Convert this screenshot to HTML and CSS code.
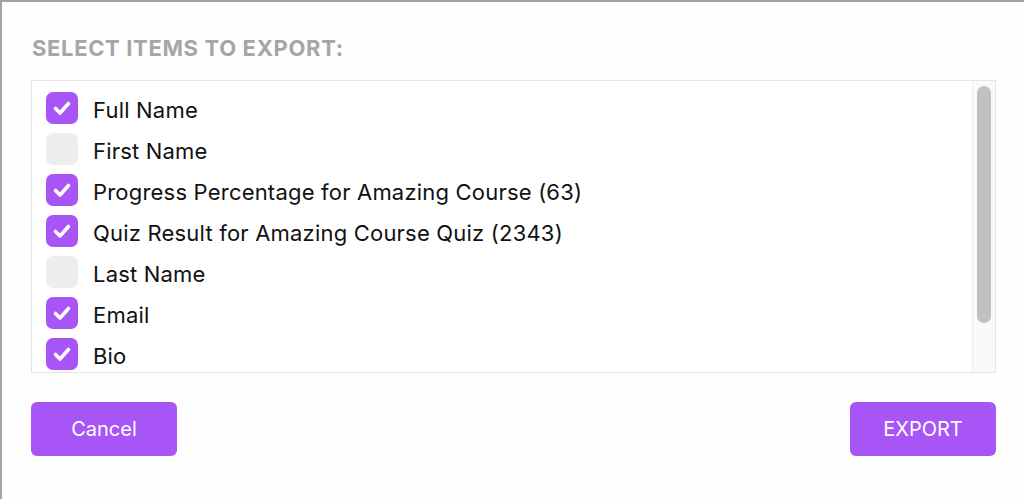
FILE: index.html
```html
<!DOCTYPE html>
<html lang="en">
<head>
<meta charset="utf-8">
<title>Export</title>
<link rel="stylesheet" href="styles.css">
</head>
<body>
<div class="dialog">
  <h2 class="title">SELECT ITEMS TO EXPORT:</h2>
  <div class="list">
    <div class="items">
      <label class="row"><span class="box on"><svg viewBox="0 0 32 32"><path d="M9.5 16.5l4.5 4.5 8.5-9.5"/></svg></span><span class="lbl">Full Name</span></label>
      <label class="row"><span class="box"></span><span class="lbl">First Name</span></label>
      <label class="row"><span class="box on"><svg viewBox="0 0 32 32"><path d="M9.5 16.5l4.5 4.5 8.5-9.5"/></svg></span><span class="lbl">Progress Percentage for Amazing Course (63)</span></label>
      <label class="row"><span class="box on"><svg viewBox="0 0 32 32"><path d="M9.5 16.5l4.5 4.5 8.5-9.5"/></svg></span><span class="lbl">Quiz Result for Amazing Course Quiz (2343)</span></label>
      <label class="row"><span class="box"></span><span class="lbl">Last Name</span></label>
      <label class="row"><span class="box on"><svg viewBox="0 0 32 32"><path d="M9.5 16.5l4.5 4.5 8.5-9.5"/></svg></span><span class="lbl">Email</span></label>
      <label class="row"><span class="box on"><svg viewBox="0 0 32 32"><path d="M9.5 16.5l4.5 4.5 8.5-9.5"/></svg></span><span class="lbl">Bio</span></label>
    </div>
    <div class="scrollbar"><div class="thumb"></div></div>
  </div>
  <div class="actions">
    <button class="btn">Cancel</button>
    <button class="btn">EXPORT</button>
  </div>
</div>
</body>
</html>
```
FILE: styles.css
```css
html, body {
  margin: 0;
  padding: 0;
  background: #ffffff;
}
body {
  font-family: Inter, "Liberation Sans", sans-serif;
  color: #111111;
}
.dialog {
  box-sizing: border-box;
  height: 499px;
  border-top: 2px solid #a3a3a3;
  border-left: 2px solid #a3a3a3;
  padding: 33px 28px 0 29px;
  background: #fefefe;
}
.title {
  margin: 0 0 19px 1px;
  font-size: 22px;
  font-weight: 700;
  line-height: 26px;
  letter-spacing: 0.65px;
  color: #a6a6a6;
}
.list {
  box-sizing: border-box;
  height: 293px;
  border: 1px solid #e6e6e6;
  display: flex;
  background: #ffffff;
}
.items {
  flex: 1;
  overflow: hidden;
  padding: 11px 0 0 14px;
  display: flex;
  flex-direction: column;
  gap: 9px;
}
.scrollbar {
  flex: none;
  width: 23px;
  box-sizing: border-box;
  border-left: 1px solid #ececec;
  background: #fafafa;
  padding: 5px 4px 0 4px;
}
.thumb {
  height: 237px;
  background: #c1c1c1;
  border-radius: 7px;
}
.row {
  display: flex;
  align-items: center;
  gap: 15px;
  flex: none;
  height: 32px;
}
.box {
  width: 32px;
  height: 32px;
  border-radius: 7px;
  background: #eeeeee;
  flex: none;
  display: flex;
}
.box.on {
  background: #a855f7;
}
.box svg {
  width: 32px;
  height: 32px;
}
.box svg path {
  fill: none;
  stroke: #ffffff;
  stroke-width: 3.6;
  stroke-linecap: round;
  stroke-linejoin: round;
}
.lbl {
  font-size: 22px;
  line-height: 26px;
  letter-spacing: 0.2px;
  padding-top: 4px;
}
.actions {
  display: flex;
  justify-content: space-between;
  margin-top: 29px;
}
.btn {
  width: 146px;
  height: 54px;
  border: none;
  border-radius: 6px;
  background: #a855f7;
  color: #ffffff;
  font-family: Inter, "Liberation Sans", sans-serif;
  font-size: 20px;
  padding: 0;
}
```
